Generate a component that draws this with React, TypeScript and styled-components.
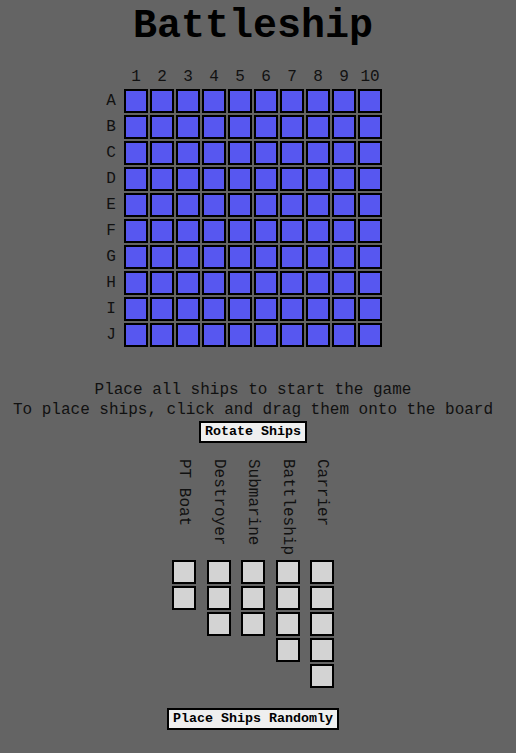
import React from 'react';
import styled, { createGlobalStyle } from 'styled-components';

const ROWS = ['A', 'B', 'C', 'D', 'E', 'F', 'G', 'H', 'I', 'J'];
const COLS = [1, 2, 3, 4, 5, 6, 7, 8, 9, 10];

const SHIPS = [
  { name: 'PT Boat', size: 2 },
  { name: 'Destroyer', size: 3 },
  { name: 'Submarine', size: 3 },
  { name: 'Battleship', size: 4 },
  { name: 'Carrier', size: 5 },
];

const GlobalStyle = createGlobalStyle`
  html, body {
    margin: 0;
    padding: 0;
    background-color: #646464;
  }
  body {
    font-family: "Liberation Mono", "DejaVu Sans Mono", monospace;
    color: #111;
  }
`;

const Page = styled.div`
  width: 506px;
  padding-top: 4px;
  display: flex;
  flex-direction: column;
  align-items: center;
`;

const Title = styled.h1`
  margin: 0;
  font-size: 40px;
  line-height: 46px;
  font-weight: bold;
  color: #000;
`;

const Board = styled.div`
  margin-top: 17px;
  display: grid;
  grid-template-columns: 22px repeat(10, 24px) 22px;
  grid-auto-rows: 24px;
  grid-template-rows: 20px;
  gap: 2px;
`;

const ColLabel = styled.div`
  font-size: 16px;
  line-height: 20px;
  text-align: center;
`;

const RowLabel = styled.div`
  font-size: 16px;
  line-height: 24px;
  text-align: center;
`;

const Spacer = styled.div``;

const Cell = styled.div<{ $fill: string }>`
  box-sizing: border-box;
  width: 24px;
  height: 24px;
  border: 2px solid #000;
  background-color: ${({ $fill }) => $fill};
`;

const Message = styled.p`
  margin: 33px 0 0 0;
  font-size: 16px;
  line-height: 20px;
  text-align: center;
`;

const Button = styled.button<{ $top: number }>`
  margin-top: ${({ $top }) => $top}px;
  font-family: "Liberation Mono", "DejaVu Sans Mono", monospace;
  font-size: 13.33px;
  line-height: 16px;
  font-weight: bold;
  color: #000;
  background-color: #efefef;
  border: 2px solid #000;
  border-radius: 0;
  padding: 1px 4px;
`;

const Dock = styled.div`
  margin-top: 16px;
  display: flex;
  gap: 10.5px;
  align-items: flex-start;
`;

const Ship = styled.div`
  width: 24px;
  display: flex;
  flex-direction: column;
  align-items: center;
  gap: 2px;
`;

const ShipName = styled.div`
  writing-mode: vertical-rl;
  height: 99px;
  font-size: 16px;
  line-height: 20px;
  white-space: nowrap;
`;

export default function App() {
  return (
    <Page>
      <GlobalStyle />
      <Title>Battleship</Title>
      <Board>
        <Spacer />
        {COLS.map((c) => (
          <ColLabel key={c}>{c}</ColLabel>
        ))}
        <Spacer />
        {ROWS.map((r) => (
          <React.Fragment key={r}>
            <RowLabel>{r}</RowLabel>
            {COLS.map((c) => (
              <Cell key={c} $fill="#5757f0" />
            ))}
            <Spacer />
          </React.Fragment>
        ))}
      </Board>
      <Message>
        Place all ships to start the game
        <br />
        To place ships, click and drag them onto the board
      </Message>
      <Button $top={1}>Rotate Ships</Button>
      <Dock>
        {SHIPS.map((s) => (
          <Ship key={s.name}>
            <ShipName>{s.name}</ShipName>
            {Array.from({ length: s.size }).map((_, i) => (
              <Cell key={i} $fill="#d3d3d3" />
            ))}
          </Ship>
        ))}
      </Dock>
      <Button $top={20}>Place Ships Randomly</Button>
    </Page>
  );
}
